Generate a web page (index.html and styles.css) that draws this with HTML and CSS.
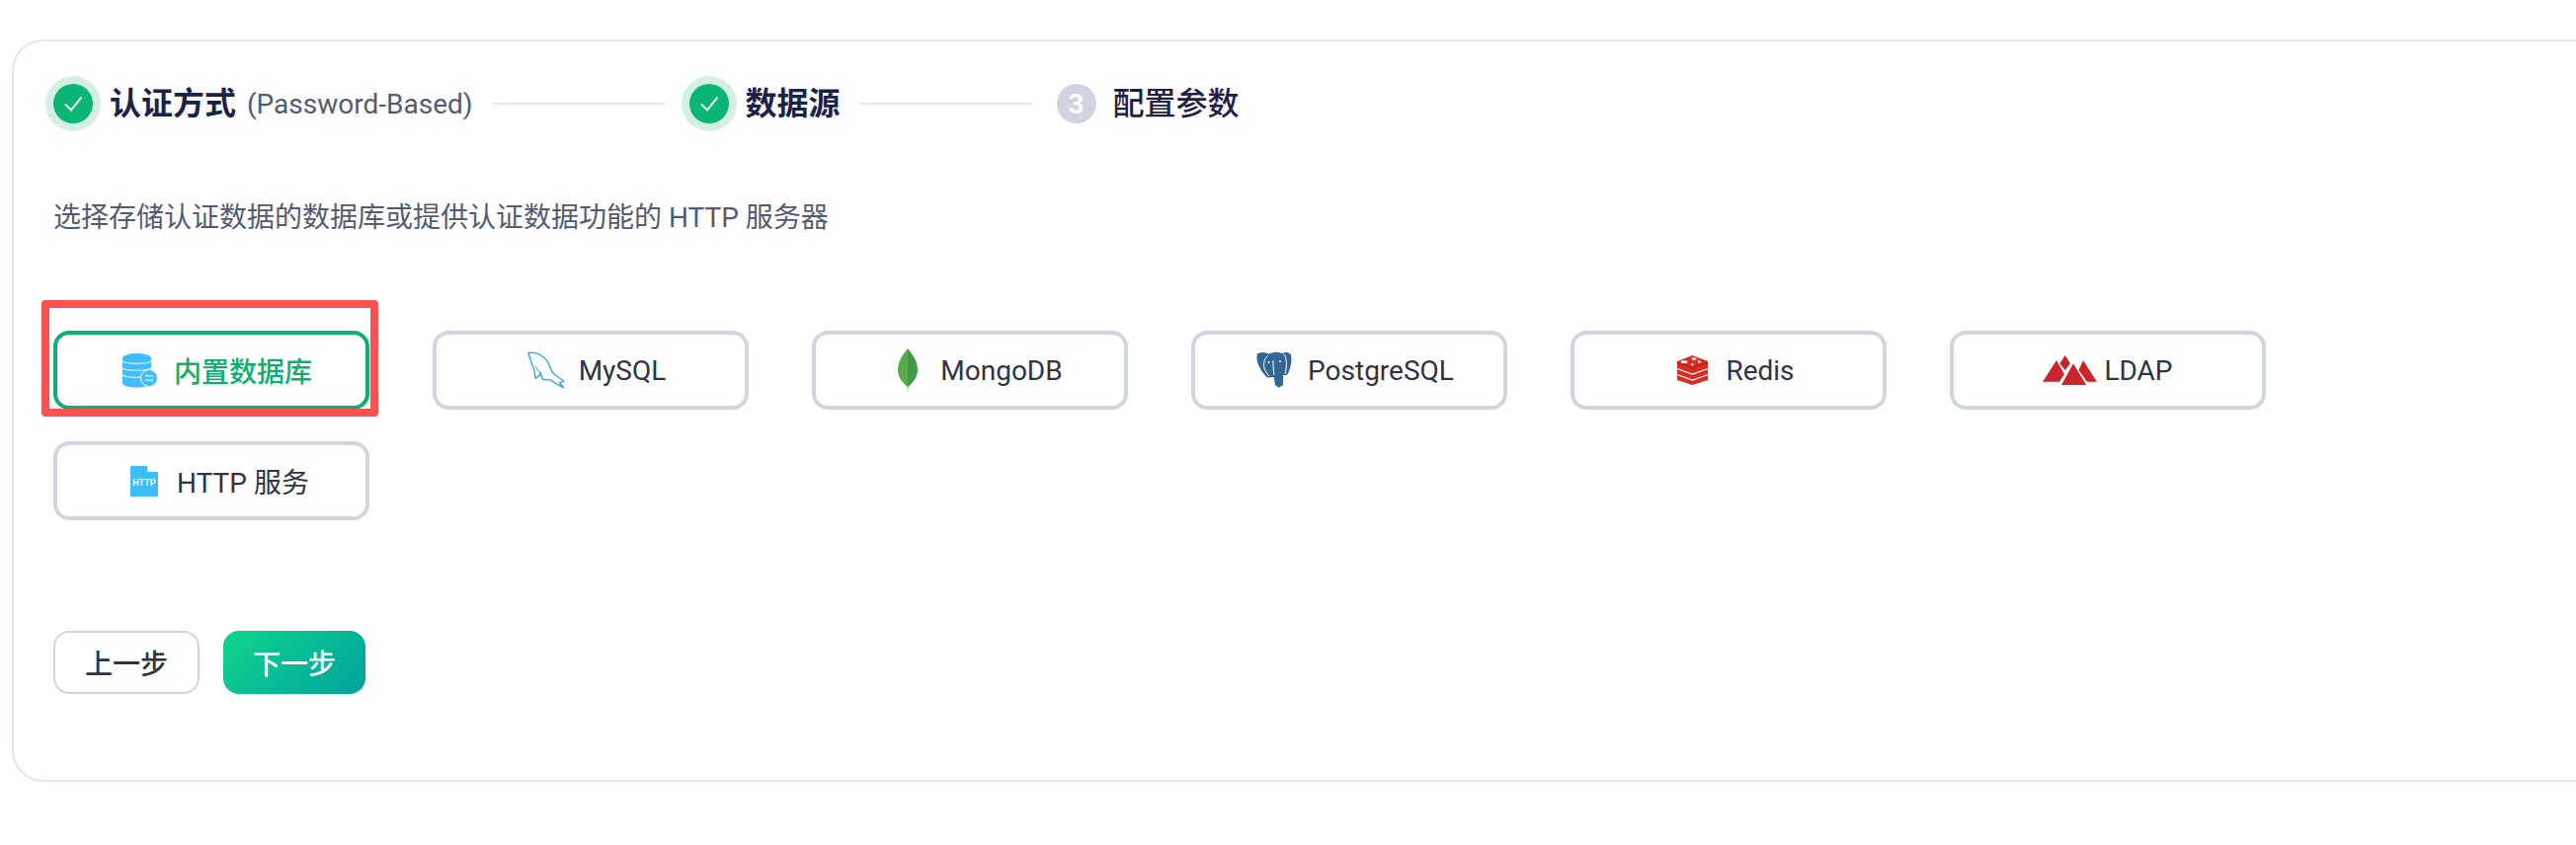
FILE: index.html
```html
<!DOCTYPE html>
<html lang="zh-CN">
<head>
    <meta charset="UTF-8">
    <title>认证方式</title>
    <link rel="stylesheet" href="styles.css">
</head>
<body>
    <div class="card">
        <div class="steps">
            <div class="step-icon done">
                <svg width="40" height="40" viewBox="0 0 40 40"><path d="M12 20.5l6 6 10.5-13" class="tick"/></svg>
            </div>
            <div class="step-title strong">认证方式</div>
            <div class="step-sub">(Password-Based)</div>
            <div class="step-line"></div>
            <div class="step-icon done">
                <svg width="40" height="40" viewBox="0 0 40 40"><path d="M12 20.5l6 6 10.5-13" class="tick"/></svg>
            </div>
            <div class="step-title strong">数据源</div>
            <div class="step-line"></div>
            <div class="step-icon todo">3</div>
            <div class="step-title">配置参数</div>
        </div>

        <p class="desc">选择存储认证数据的数据库或提供认证数据功能的 HTTP 服务器</p>

        <div class="options">
            <div class="option selected">
                <svg class="opt-icon" width="48" height="48" viewBox="0 0 48 48">
                    <path fill="#40bdff" d="M12 12c0-3 7-5 14.500-5S41 9 41 12v25c0 3-7 4.500-14.500 4.500S12 40 12 37z"/>
                    <path d="M12 15c3 3 26 3 29 0M12 22c3 3 26 3 29 0M12 29c3 3 26 3 29 0" class="db-line"/>
                    <circle cx="39" cy="32" r="8.500" fill="#40bdff" stroke="#fff" stroke-width="1"/>
                    <path d="M35 30h8M35 34h8M37 28l-2 2M41 36l2-2" class="db-line"/>
                </svg>
                <span>内置数据库</span>
                <div class="mark"></div>
            </div>
            <div class="option">
                <svg class="opt-icon" width="48" height="48" viewBox="0 0 48 48">
                    <path d="M13 6.300C17 6 21 6.500 24 8c4 2 7 5 9 8 2 5 3 10 7.300 13 3 2 6 4 8.400 6l-4.400 1.700 4.400 5-8.400-4.400-5-3.300c-3-.5-6-.2-7.600-.7-1.400-2-1.800-4-2.400-6-.5 2-2.500 3-5 5-1-3-.5-7-2.600-11.600C16 16 14 11 13 6.300z" fill="none" stroke="#2d9fdc" stroke-width="1.300"/>
                    <path d="M20 20c2 3 3 5 5 7" fill="none" stroke="#2d9fdc" stroke-width="1"/>
                </svg>
                <span>MySQL</span>
            </div>
            <div class="option">
                <svg class="opt-icon" width="48" height="48" viewBox="0 0 48 48">
                    <path fill="#b8a67a" d="M30.400 38h1.200l-.3 8h-.6z"/>
                    <path fill="#5ba84f" d="M31 2C25 9 21 16 21 24c0 7 5 13 10 17z"/>
                    <path fill="#439a46" d="M31 2c6 7 10 14 10 22 0 7-5 13-10 17z"/>
                </svg>
                <span>MongoDB</span>
            </div>
            <div class="option">
                <svg class="opt-icon" width="48" height="48" viewBox="0 0 48 48">
                    <path fill="#336791" d="M13 7.300c4-1.800 8-1.800 12 .2 4-2 9-2.500 13-.5 3-1.500 6-1.500 8.500.5 2 4.500 1 14.500-3.500 21.500h-4v10l-4.300 2.700-3.700-2.700-1.300-8-6.200.5C18 28 13 18 12.500 13c-.2-2 .1-4 .5-5.700z"/>
                    <path d="M24 9c-4 3-5 8-4 13 1 3 3 6 5 8M40 8c3 4 3 12 1 20M29 14c0 5 0 10 1 15" fill="none" stroke="#fff" stroke-width="1"/>
                    <circle cx="24.500" cy="16" r="1" fill="#fff"/>
                    <circle cx="36" cy="15" r="1" fill="#fff"/>
                </svg>
                <span>PostgreSQL</span>
            </div>
            <div class="option">
                <svg class="opt-icon" width="48" height="48" viewBox="0 0 48 48">
                    <path fill="#d82c20" d="M15 15l15.500-6L46 15v19l-15.500 5L15 34z"/>
                    <path d="M15 22.500l15.500 5.500L46 22.500M15 28.500l15.500 5.500L46 28.500" fill="none" stroke="#fff" stroke-width="1.300"/>
                    <path d="M15 16.500l15.500 5L46 16.500" fill="none" stroke="#a41e11" stroke-width="1"/>
                    <ellipse cx="22" cy="15.500" rx="3.500" ry="1.600" fill="#fff"/>
                    <ellipse cx="32" cy="12.500" rx="2.500" ry="1.200" fill="#fff"/>
                    <path fill="#fff" d="M36 14l4 1.500-4 1.500zM28 18.500l3-1.500 1 2.500z"/>
                </svg>
                <span>Redis</span>
            </div>
            <div class="option">
                <svg class="opt-icon wide" width="56" height="48" viewBox="0 0 56 48">
                    <path fill="#c9252b" d="M0 35.700L14 14l8 14-5 7.700zM22.800 9l5.200 8.300-5.200 6.700-5.500-6.700zM41 14l14 21.700H45L36.500 24zM31 17.300L44.300 39H19z"/>
                </svg>
                <span>LDAP</span>
            </div>
            <div class="option">
                <svg class="opt-icon" width="48" height="48" viewBox="0 0 48 48">
                    <path fill="#40bdff" d="M17 9h17v6h11v25H17z"/>
                    <text x="31" y="29" class="http-text">HTTP</text>
                </svg>
                <span>HTTP 服务</span>
            </div>
        </div>

        <div class="actions">
            <button class="btn">上一步</button>
            <button class="btn primary">下一步</button>
        </div>
    </div>
</body>
</html>
```

FILE: styles.css
```css
*{
    box-sizing: border-box;
}
html, body{
    height: 100%;
    overflow: hidden;
}
body{
    margin: 0;
    padding: 40px 0 0 12px;
    background: #fff;
    font-family: Roboto, "Noto Sans CJK SC", sans-serif;
}
.card{
    width: 2800px;
    height: 752px;
    padding: 43px 40px 0;
    border: 2px solid #e3e6f0;
    border-radius: 32px;
}
.steps{
    display: flex;
    align-items: center;
    height: 40px;
}
.step-icon{
    flex: none;
    width: 40px;
    height: 40px;
    border-radius: 50%;
    display: flex;
    align-items: center;
    justify-content: center;
}
.done{
    background: #0bb572;
    box-shadow: 0 0 0 8px #d6efe3;
}
.todo{
    background: #cfd4de;
    color: #fff;
    font-size: 28px;
    font-weight: 700;
}
.tick{
    fill: none;
    stroke: #e4f7ee;
    stroke-width: 2;
}
.step-title{
    margin-left: 17px;
    font-size: 32px;
    line-height: 40px;
    font-weight: 500;
    color: #1c2148;
}
.step-title.strong{
    font-weight: 700;
}
.step-sub{
    margin-left: 11px;
    font-size: 28px;
    color: #525b72;
}
.step-line{
    width: 174px;
    height: 2px;
    margin: 0 25px 0 20px;
    background: #e1ebe7;
}
.desc{
    margin: 76px 0 0;
    font-size: 28px;
    line-height: 40px;
    color: #525b72;
}
.options{
    display: grid;
    grid-template-columns: repeat(6, 320px);
    gap: 32px 64px;
    margin-top: 94px;
}
.option{
    position: relative;
    height: 80px;
    display: flex;
    align-items: center;
    justify-content: center;
    border: 4px solid #d1d5de;
    border-radius: 16px;
    font-size: 28px;
    color: #2f3342;
}
.opt-icon{
    flex: none;
    margin-right: 16px;
    overflow: visible;
}
.opt-icon.wide{
    margin-right: 6px;
}
.selected{
    border-color: #0bb071;
    color: #0bb071;
    font-weight: 500;
}
/* red annotation box from the original screenshot */
.mark{
    position: absolute;
    left: -16px;
    top: -35px;
    width: 341px;
    height: 118px;
    border: 8px solid #fe5252;
    border-radius: 4px;
}
.db-line{
    fill: none;
    stroke: #fff;
    stroke-width: 1;
}
.http-text{
    fill: #fff;
    font-size: 9px;
    font-weight: 700;
    text-anchor: middle;
}
.actions{
    display: flex;
    gap: 24px;
    margin-top: 112px;
}
.btn{
    width: 148px;
    height: 64px;
    padding: 0;
    border: 2px solid #d1d5de;
    border-radius: 16px;
    background: #fff;
    font-family: inherit;
    font-size: 28px;
    font-weight: 500;
    color: #2f3342;
}
.btn.primary{
    width: 144px;
    border: 0;
    background: linear-gradient(135deg, #10d48b, #00a39e);
    color: #fff;
}
```
